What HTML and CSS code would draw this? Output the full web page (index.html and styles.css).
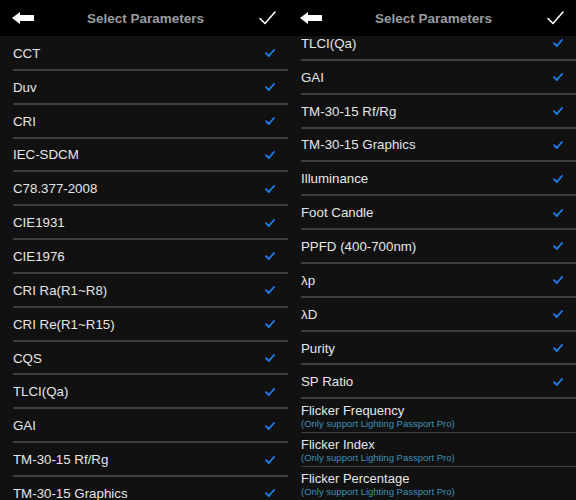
FILE: index.html
```html
<!DOCTYPE html>
<html>
<head>
<meta charset="utf-8">
<link rel="stylesheet" href="styles.css">
</head>
<body>
<div class="screens">
  <section class="panel">
    <header class="bar">
      <svg class="back" width="22" height="12" viewBox="0 0 22 12"><path d="M0 6 L8 0 L8 3 L22 3 L22 9 L8 9 L8 12 Z" fill="#fff"/></svg>
      <span class="title">Select Parameters</span>
      <svg class="done" width="17" height="14" viewBox="0 0 17 14"><path d="M1 7.5 L6 12.5 L16 1" fill="none" stroke="#fff" stroke-width="1.6" stroke-linecap="round" stroke-linejoin="round"/></svg>
    </header>
    <div class="viewport">
      <ul class="list">
        <li class="row"><span>CCT</span><svg class="tick" width="10" height="8" viewBox="0 0 10 8"><path d="M1 4.2 L3.8 7 L9 1" fill="none" stroke="#1e7ff0" stroke-width="1.8" stroke-linecap="round" stroke-linejoin="round"/></svg></li>
        <li class="row"><span>Duv</span><svg class="tick" width="10" height="8" viewBox="0 0 10 8"><path d="M1 4.2 L3.8 7 L9 1" fill="none" stroke="#1e7ff0" stroke-width="1.8" stroke-linecap="round" stroke-linejoin="round"/></svg></li>
        <li class="row"><span>CRI</span><svg class="tick" width="10" height="8" viewBox="0 0 10 8"><path d="M1 4.2 L3.8 7 L9 1" fill="none" stroke="#1e7ff0" stroke-width="1.8" stroke-linecap="round" stroke-linejoin="round"/></svg></li>
        <li class="row"><span>IEC-SDCM</span><svg class="tick" width="10" height="8" viewBox="0 0 10 8"><path d="M1 4.2 L3.8 7 L9 1" fill="none" stroke="#1e7ff0" stroke-width="1.8" stroke-linecap="round" stroke-linejoin="round"/></svg></li>
        <li class="row"><span>C78.377-2008</span><svg class="tick" width="10" height="8" viewBox="0 0 10 8"><path d="M1 4.2 L3.8 7 L9 1" fill="none" stroke="#1e7ff0" stroke-width="1.8" stroke-linecap="round" stroke-linejoin="round"/></svg></li>
        <li class="row"><span>CIE1931</span><svg class="tick" width="10" height="8" viewBox="0 0 10 8"><path d="M1 4.2 L3.8 7 L9 1" fill="none" stroke="#1e7ff0" stroke-width="1.8" stroke-linecap="round" stroke-linejoin="round"/></svg></li>
        <li class="row"><span>CIE1976</span><svg class="tick" width="10" height="8" viewBox="0 0 10 8"><path d="M1 4.2 L3.8 7 L9 1" fill="none" stroke="#1e7ff0" stroke-width="1.8" stroke-linecap="round" stroke-linejoin="round"/></svg></li>
        <li class="row"><span>CRI Ra(R1~R8)</span><svg class="tick" width="10" height="8" viewBox="0 0 10 8"><path d="M1 4.2 L3.8 7 L9 1" fill="none" stroke="#1e7ff0" stroke-width="1.8" stroke-linecap="round" stroke-linejoin="round"/></svg></li>
        <li class="row"><span>CRI Re(R1~R15)</span><svg class="tick" width="10" height="8" viewBox="0 0 10 8"><path d="M1 4.2 L3.8 7 L9 1" fill="none" stroke="#1e7ff0" stroke-width="1.8" stroke-linecap="round" stroke-linejoin="round"/></svg></li>
        <li class="row"><span>CQS</span><svg class="tick" width="10" height="8" viewBox="0 0 10 8"><path d="M1 4.2 L3.8 7 L9 1" fill="none" stroke="#1e7ff0" stroke-width="1.8" stroke-linecap="round" stroke-linejoin="round"/></svg></li>
        <li class="row"><span>TLCI(Qa)</span><svg class="tick" width="10" height="8" viewBox="0 0 10 8"><path d="M1 4.2 L3.8 7 L9 1" fill="none" stroke="#1e7ff0" stroke-width="1.8" stroke-linecap="round" stroke-linejoin="round"/></svg></li>
        <li class="row"><span>GAI</span><svg class="tick" width="10" height="8" viewBox="0 0 10 8"><path d="M1 4.2 L3.8 7 L9 1" fill="none" stroke="#1e7ff0" stroke-width="1.8" stroke-linecap="round" stroke-linejoin="round"/></svg></li>
        <li class="row"><span>TM-30-15 Rf/Rg</span><svg class="tick" width="10" height="8" viewBox="0 0 10 8"><path d="M1 4.2 L3.8 7 L9 1" fill="none" stroke="#1e7ff0" stroke-width="1.8" stroke-linecap="round" stroke-linejoin="round"/></svg></li>
        <li class="row"><span>TM-30-15 Graphics</span><svg class="tick" width="10" height="8" viewBox="0 0 10 8"><path d="M1 4.2 L3.8 7 L9 1" fill="none" stroke="#1e7ff0" stroke-width="1.8" stroke-linecap="round" stroke-linejoin="round"/></svg></li>
      </ul>
    </div>
  </section>
  <section class="panel">
    <header class="bar">
      <svg class="back" width="22" height="12" viewBox="0 0 22 12"><path d="M0 6 L8 0 L8 3 L22 3 L22 9 L8 9 L8 12 Z" fill="#fff"/></svg>
      <span class="title">Select Parameters</span>
      <svg class="done" width="17" height="14" viewBox="0 0 17 14"><path d="M1 7.5 L6 12.5 L16 1" fill="none" stroke="#fff" stroke-width="1.6" stroke-linecap="round" stroke-linejoin="round"/></svg>
    </header>
    <div class="viewport">
      <ul class="list scrolled">
        <li class="row"><span>TLCI(Qa)</span><svg class="tick" width="10" height="8" viewBox="0 0 10 8"><path d="M1 4.2 L3.8 7 L9 1" fill="none" stroke="#1e7ff0" stroke-width="1.8" stroke-linecap="round" stroke-linejoin="round"/></svg></li>
        <li class="row"><span>GAI</span><svg class="tick" width="10" height="8" viewBox="0 0 10 8"><path d="M1 4.2 L3.8 7 L9 1" fill="none" stroke="#1e7ff0" stroke-width="1.8" stroke-linecap="round" stroke-linejoin="round"/></svg></li>
        <li class="row"><span>TM-30-15 Rf/Rg</span><svg class="tick" width="10" height="8" viewBox="0 0 10 8"><path d="M1 4.2 L3.8 7 L9 1" fill="none" stroke="#1e7ff0" stroke-width="1.8" stroke-linecap="round" stroke-linejoin="round"/></svg></li>
        <li class="row"><span>TM-30-15 Graphics</span><svg class="tick" width="10" height="8" viewBox="0 0 10 8"><path d="M1 4.2 L3.8 7 L9 1" fill="none" stroke="#1e7ff0" stroke-width="1.8" stroke-linecap="round" stroke-linejoin="round"/></svg></li>
        <li class="row"><span>Illuminance</span><svg class="tick" width="10" height="8" viewBox="0 0 10 8"><path d="M1 4.2 L3.8 7 L9 1" fill="none" stroke="#1e7ff0" stroke-width="1.8" stroke-linecap="round" stroke-linejoin="round"/></svg></li>
        <li class="row"><span>Foot Candle</span><svg class="tick" width="10" height="8" viewBox="0 0 10 8"><path d="M1 4.2 L3.8 7 L9 1" fill="none" stroke="#1e7ff0" stroke-width="1.8" stroke-linecap="round" stroke-linejoin="round"/></svg></li>
        <li class="row"><span>PPFD (400-700nm)</span><svg class="tick" width="10" height="8" viewBox="0 0 10 8"><path d="M1 4.2 L3.8 7 L9 1" fill="none" stroke="#1e7ff0" stroke-width="1.8" stroke-linecap="round" stroke-linejoin="round"/></svg></li>
        <li class="row"><span>λp</span><svg class="tick" width="10" height="8" viewBox="0 0 10 8"><path d="M1 4.2 L3.8 7 L9 1" fill="none" stroke="#1e7ff0" stroke-width="1.8" stroke-linecap="round" stroke-linejoin="round"/></svg></li>
        <li class="row"><span>λD</span><svg class="tick" width="10" height="8" viewBox="0 0 10 8"><path d="M1 4.2 L3.8 7 L9 1" fill="none" stroke="#1e7ff0" stroke-width="1.8" stroke-linecap="round" stroke-linejoin="round"/></svg></li>
        <li class="row"><span>Purity</span><svg class="tick" width="10" height="8" viewBox="0 0 10 8"><path d="M1 4.2 L3.8 7 L9 1" fill="none" stroke="#1e7ff0" stroke-width="1.8" stroke-linecap="round" stroke-linejoin="round"/></svg></li>
        <li class="row"><span>SP Ratio</span><svg class="tick" width="10" height="8" viewBox="0 0 10 8"><path d="M1 4.2 L3.8 7 L9 1" fill="none" stroke="#1e7ff0" stroke-width="1.8" stroke-linecap="round" stroke-linejoin="round"/></svg></li>
        <li class="row two"><div class="stack"><span>Flicker Frequency</span><small>(Only support Lighting Passport Pro)</small></div></li>
        <li class="row two"><div class="stack"><span>Flicker Index</span><small>(Only support Lighting Passport Pro)</small></div></li>
        <li class="row two"><div class="stack"><span>Flicker Percentage</span><small>(Only support Lighting Passport Pro)</small></div></li>
      </ul>
    </div>
  </section>
</div>
</body>
</html>
```
FILE: styles.css
```css
* { box-sizing: border-box; }
html, body { margin: 0; padding: 0; background: #111111; }
body { font-family: "Liberation Sans", Arial, sans-serif; width: 576px; height: 500px; overflow: hidden; }
.screens { display: flex; width: 576px; height: 500px; }
.panel { width: 288px; height: 500px; display: flex; flex-direction: column; background: #111111; }
.bar {
  height: 36px; flex: none; background: #000; display: flex; align-items: center;
  padding: 0 12px 0 12px; position: relative; z-index: 1;
}
.back { flex: none; margin-top: 0; }
.title { flex: 1; text-align: center; color: #9c9c9c; font-weight: bold; font-size: 13.5px; margin-right: 2px; margin-top: 1px; }
.done { flex: none; margin-top: -1px; }
.viewport { flex: 1; overflow: hidden; }
.list { list-style: none; margin: 0; padding: 1px 0 0 13px; }
.list.scrolled { margin-top: -10px; }
.row {
  height: 33.85px; display: flex; align-items: center; justify-content: space-between;
  border-bottom: 2px solid #3f3f3f; padding-right: 13px; color: #e6e6e6; font-size: 13.3px;
}
.row span { padding-top: 1px; }
.tick { flex: none; margin-top: 1px; }
.row.two { border-bottom-width: 1.5px; }
.stack { display: flex; flex-direction: column; line-height: 1; }
.stack span { font-size: 13px; color: #e6e6e6; padding-top: 1px; }
.stack small { font-size: 9.5px; color: #3f90b4; margin-top: 2px; }
```
